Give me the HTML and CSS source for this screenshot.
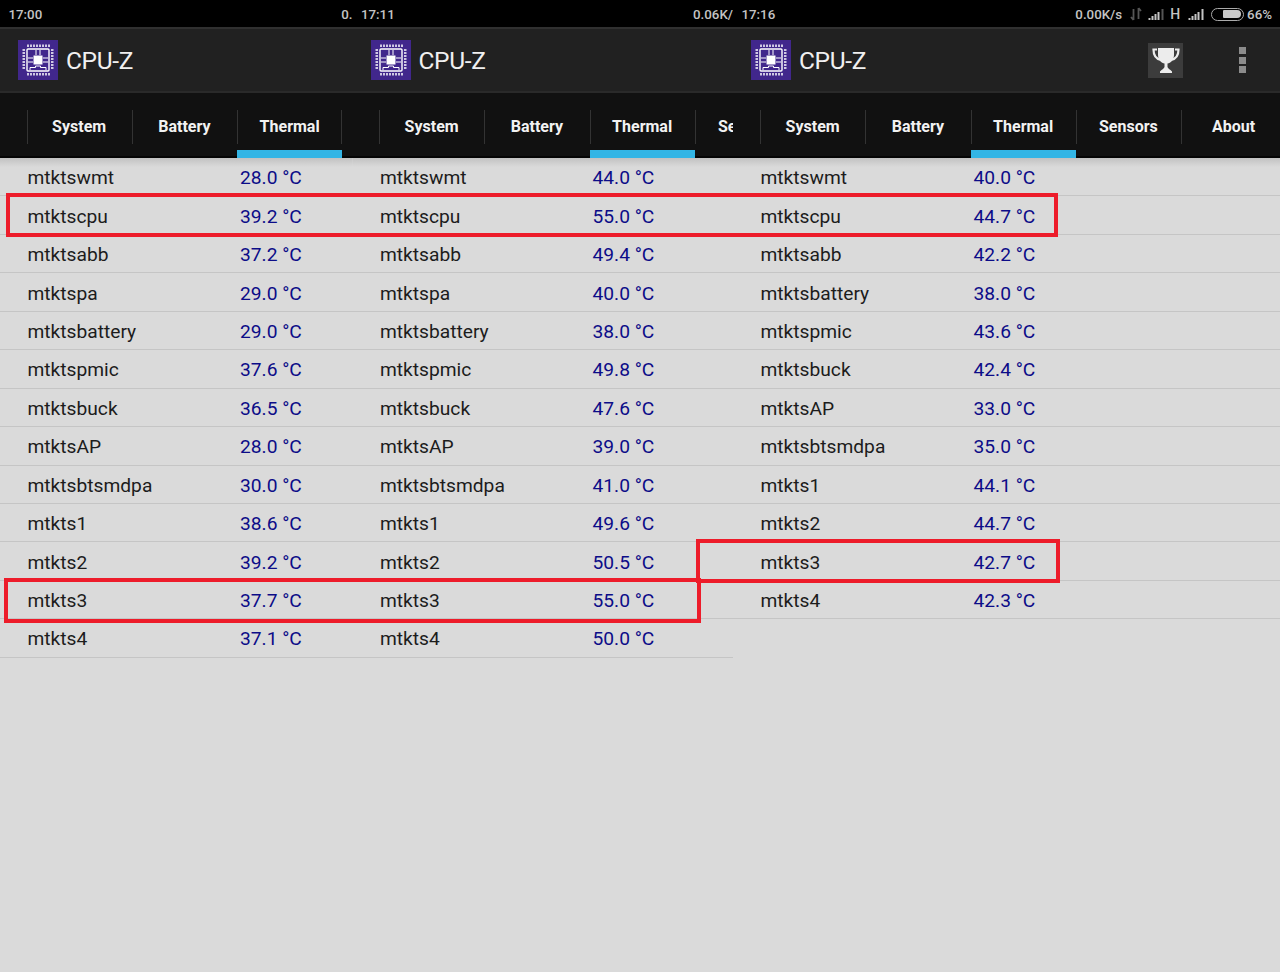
FILE: index.html
```html
<!DOCTYPE html>
<html lang="en">
<head>
<meta charset="utf-8">
<title>CPU-Z Thermal comparison</title>
<link rel="stylesheet" href="styles.css">
</head>
<body>
<svg class="defs" width="0" height="0" aria-hidden="true">
  <symbol id="chip" viewBox="0 0 40 40">
    <rect width="40" height="40" fill="#41278c"/>
    <rect x="9" y="9" width="22" height="22" rx="1" fill="none" stroke="#fff" stroke-width="1.4"/>
    <rect x="15.5" y="15.5" width="9" height="9" fill="#fff"/>
    <path d="M10 4.5V7M13 4.5V7M16 4.5V7M19 4.5V7M22 4.5V7M25 4.5V7M28 4.5V7M31 4.5V7M10 33V35.500M13 33V35.500M16 33V35.500M19 33V35.500M22 33V35.500M25 33V35.500M28 33V35.500M31 33V35.500" stroke="#fff" stroke-width="1.500" fill="none"/>
    <path d="M4.500 10H7M4.500 13H7M4.500 16H7M4.500 19H7M4.500 22H7M4.500 25H7M4.500 28H7M33 10H35.500M33 13H35.500M33 16H35.500M33 19H35.500M33 22H35.500M33 25H35.500M33 28H35.500" stroke="#fff" stroke-width="1.500" fill="none"/>
    <path d="M18 10V15M22 10V15M10 18H15M10 22H15M25 18H30M25 22H30M12 30V27.500H17.500V26H22.500V27.500H28V30" stroke="#fff" stroke-width="1" fill="none"/>
  </symbol>
</svg>
<div class="screen">

  <section class="panel panel-a">
    <div class="status"><span>17:00</span><span class="status-clip">0.</span></div>
    <header class="appbar">
      <svg class="logo"><use href="#chip"/></svg>
      <h1 class="title">CPU-Z</h1>
    </header>
    <nav class="tabs">
      <span class="tab">System</span>
      <span class="tab">Battery</span>
      <span class="tab tab-active">Thermal</span>
    </nav>
    <div class="list">
      <div class="row"><span class="name">mtktswmt</span><span class="val">28.0 °C</span></div>
      <div class="row"><span class="name">mtktscpu</span><span class="val">39.2 °C</span></div>
      <div class="row"><span class="name">mtktsabb</span><span class="val">37.2 °C</span></div>
      <div class="row"><span class="name">mtktspa</span><span class="val">29.0 °C</span></div>
      <div class="row"><span class="name">mtktsbattery</span><span class="val">29.0 °C</span></div>
      <div class="row"><span class="name">mtktspmic</span><span class="val">37.6 °C</span></div>
      <div class="row"><span class="name">mtktsbuck</span><span class="val">36.5 °C</span></div>
      <div class="row"><span class="name">mtktsAP</span><span class="val">28.0 °C</span></div>
      <div class="row"><span class="name">mtktsbtsmdpa</span><span class="val">30.0 °C</span></div>
      <div class="row"><span class="name">mtkts1</span><span class="val">38.6 °C</span></div>
      <div class="row"><span class="name">mtkts2</span><span class="val">39.2 °C</span></div>
      <div class="row"><span class="name">mtkts3</span><span class="val">37.7 °C</span></div>
      <div class="row"><span class="name">mtkts4</span><span class="val">37.1 °C</span></div>
    </div>
  </section>

  <section class="panel panel-b">
    <div class="status"><span>17:11</span><span class="status-clip">0.06K/</span></div>
    <header class="appbar">
      <svg class="logo"><use href="#chip"/></svg>
      <h1 class="title">CPU-Z</h1>
    </header>
    <nav class="tabs">
      <span class="tab">System</span>
      <span class="tab">Battery</span>
      <span class="tab tab-active">Thermal</span>
      <span class="tab">Sensors</span>
    </nav>
    <div class="list">
      <div class="row"><span class="name">mtktswmt</span><span class="val">44.0 °C</span></div>
      <div class="row"><span class="name">mtktscpu</span><span class="val">55.0 °C</span></div>
      <div class="row"><span class="name">mtktsabb</span><span class="val">49.4 °C</span></div>
      <div class="row"><span class="name">mtktspa</span><span class="val">40.0 °C</span></div>
      <div class="row"><span class="name">mtktsbattery</span><span class="val">38.0 °C</span></div>
      <div class="row"><span class="name">mtktspmic</span><span class="val">49.8 °C</span></div>
      <div class="row"><span class="name">mtktsbuck</span><span class="val">47.6 °C</span></div>
      <div class="row"><span class="name">mtktsAP</span><span class="val">39.0 °C</span></div>
      <div class="row"><span class="name">mtktsbtsmdpa</span><span class="val">41.0 °C</span></div>
      <div class="row"><span class="name">mtkts1</span><span class="val">49.6 °C</span></div>
      <div class="row"><span class="name">mtkts2</span><span class="val">50.5 °C</span></div>
      <div class="row"><span class="name">mtkts3</span><span class="val">55.0 °C</span></div>
      <div class="row"><span class="name">mtkts4</span><span class="val">50.0 °C</span></div>
    </div>
  </section>

  <section class="panel panel-c">
    <div class="status">
      <span>17:16</span>
      <div class="status-right">
        <span class="speed">0.00K/s</span>
        <svg class="ico-arrows" width="12" height="14" viewBox="0 0 12 14"><path d="M3.500 13V2M1 10L3.500 13M8.500 1V12M8.500 1L11 4" stroke="#555" stroke-width="1.800" fill="none"/></svg>
        <svg class="ico-signal" width="17" height="12" viewBox="0 0 17 12"><path d="M1.500 12V10M4.500 12V8M7.500 12V6M10.500 12V4" stroke="#c4c4c4" stroke-width="2" fill="none"/><path d="M14.500 12V1" stroke="#555" stroke-width="2" fill="none"/></svg>
        <span class="net">H</span>
        <svg class="ico-signal" width="17" height="12" viewBox="0 0 17 12"><path d="M1.500 12V10M4.500 12V8M7.500 12V6M10.500 12V4M14.500 12V1" stroke="#c4c4c4" stroke-width="2" fill="none"/></svg>
        <div class="battery"><div class="battery-fill"></div></div>
        <span class="pct">66%</span>
      </div>
    </div>
    <header class="appbar">
      <svg class="logo"><use href="#chip"/></svg>
      <h1 class="title">CPU-Z</h1>
      <div class="actions">
        <div class="trophy">
          <svg width="30" height="30" viewBox="0 0 30 30"><path d="M7 3H23V10C23 15 19.500 18 16.500 18.500V22C16.500 23 19 24.500 21 26.500V28H9V26.500C11 24.500 13.500 23 13.500 22V18.500C10.500 18 7 15 7 10Z" fill="#ececec"/><path d="M6 4.500H2.500C2.500 10 5 14 10 15M24 4.500H27.500C27.500 10 25 14 20 15" fill="none" stroke="#ececec" stroke-width="2.200"/></svg>
        </div>
        <div class="overflow"><i></i><i></i><i></i></div>
      </div>
    </header>
    <nav class="tabs">
      <span class="tab">System</span>
      <span class="tab">Battery</span>
      <span class="tab tab-active">Thermal</span>
      <span class="tab">Sensors</span>
      <span class="tab">About</span>
    </nav>
    <div class="list">
      <div class="row"><span class="name">mtktswmt</span><span class="val">40.0 °C</span></div>
      <div class="row"><span class="name">mtktscpu</span><span class="val">44.7 °C</span></div>
      <div class="row"><span class="name">mtktsabb</span><span class="val">42.2 °C</span></div>
      <div class="row"><span class="name">mtktsbattery</span><span class="val">38.0 °C</span></div>
      <div class="row"><span class="name">mtktspmic</span><span class="val">43.6 °C</span></div>
      <div class="row"><span class="name">mtktsbuck</span><span class="val">42.4 °C</span></div>
      <div class="row"><span class="name">mtktsAP</span><span class="val">33.0 °C</span></div>
      <div class="row"><span class="name">mtktsbtsmdpa</span><span class="val">35.0 °C</span></div>
      <div class="row"><span class="name">mtkts1</span><span class="val">44.1 °C</span></div>
      <div class="row"><span class="name">mtkts2</span><span class="val">44.7 °C</span></div>
      <div class="row"><span class="name">mtkts3</span><span class="val">42.7 °C</span></div>
      <div class="row"><span class="name">mtkts4</span><span class="val">42.3 °C</span></div>
    </div>
  </section>

  <div class="mark mark-1"></div>
  <div class="mark mark-2"></div>
  <div class="mark mark-3"></div>
</div>
</body>
</html>
```

FILE: styles.css
```css
* { box-sizing: border-box; }
html, body { margin: 0; padding: 0; background: #dadada; }
.defs { position: absolute; }
.screen {
  position: relative;
  display: flex;
  width: 1280px;
  height: 972px;
  overflow: hidden;
  font-family: Roboto, "Liberation Sans", sans-serif;
  background: #dadada;
}
.panel { display: flex; flex-direction: column; flex: none; overflow: hidden; }
.panel-a { width: 352.500px; }
.panel-b { width: 380.500px; }
.panel-c { width: 547px; }

.status {
  height: 27px;
  flex: none;
  background: #000;
  color: #c4c4c4;
  font-size: 13.300px;
  font-weight: 500;
  display: flex;
  align-items: center;
  justify-content: space-between;
  padding: 1px 0 0 8.500px;
  white-space: nowrap;
}
.status-clip { display: block; }
.status-right { display: flex; align-items: center; padding-right: 8px; }
.speed { margin-right: 8px; }
.ico-arrows { margin-right: 6px; }
.ico-signal { display: block; }
.net { margin: 0 8px 0 5px; font-size: 14px; }
.battery {
  width: 33px;
  height: 13px;
  margin: 0 3px 0 6px;
  border: 1.500px solid #aaa;
  border-radius: 7px;
  padding: 1.500px 2px 1.500px 11px;
}
.battery-fill { height: 100%; background: #c8c8c8; border-radius: 1px 4px 4px 1px; }

.appbar {
  height: 66px;
  flex: none;
  display: flex;
  align-items: center;
  background: #212121;
  border-top: 2px solid #303030;
  border-bottom: 2px solid #2a2a2a;
  padding-left: 18px;
}
.logo { width: 40px; height: 40px; flex: none; }
.title {
  margin: 1px 0 0 8px;
  font-size: 24.500px;
  font-weight: 400;
  color: #f0f0f0;
  letter-spacing: -0.35px;
}
.actions { margin-left: auto; display: flex; align-items: center; }
.trophy {
  width: 35px;
  height: 35px;
  background: #3c3c3c;
  display: flex;
  align-items: center;
  justify-content: center;
}
.overflow { display: flex; flex-direction: column; gap: 2.500px; margin: 0 34px 0 56px; }
.overflow i { display: block; width: 7px; height: 7px; background: #8c8c8c; }

.tabs {
  height: 65px;
  flex: none;
  display: flex;
  background: linear-gradient(#111 63px, #050505 63px);
  padding: 2px 0 0 26.500px;
  overflow: hidden;
}
.panel-c .tabs { padding-left: 27px; }
.tab {
  width: 105.250px;
  flex: none;
  position: relative;
  display: flex;
  align-items: center;
  justify-content: center;
  color: #f2f2f2;
  font-size: 16px;
  font-weight: 700;
}
.tab::before, .tab:last-child::after {
  content: "";
  position: absolute;
  top: 15px;
  height: 34px;
  width: 1px;
  left: 0;
  background: #333;
}
.tab:last-child::after { left: auto; right: 0; }
.tab-active { box-shadow: inset 0 -8px 0 #33b5e5; }

.list {
  flex: 1;
  background: linear-gradient(#c2c2c2, #dadada 9px) no-repeat top/100% 12px, #dadada;
}
.row {
  height: 38.450px;
  display: flex;
  align-items: center;
  border-bottom: 1px solid #c5c5c5;
  font-size: 19.200px;
  padding: 2px 0 0 27.500px;
}
.name { width: 212.500px; flex: none; color: #1c1c1c; }
.panel-c .name { width: 213px; }
.val { color: #0c0c88; }

.mark { position: absolute; border: 4px solid #ed1c2a; pointer-events: none; }
.mark-1 { left: 6px; top: 193px; width: 1052px; height: 44px; }
.mark-2 { left: 4px; top: 578px; width: 697px; height: 45px; }
.mark-3 { left: 696px; top: 539px; width: 364px; height: 44px; }
```
